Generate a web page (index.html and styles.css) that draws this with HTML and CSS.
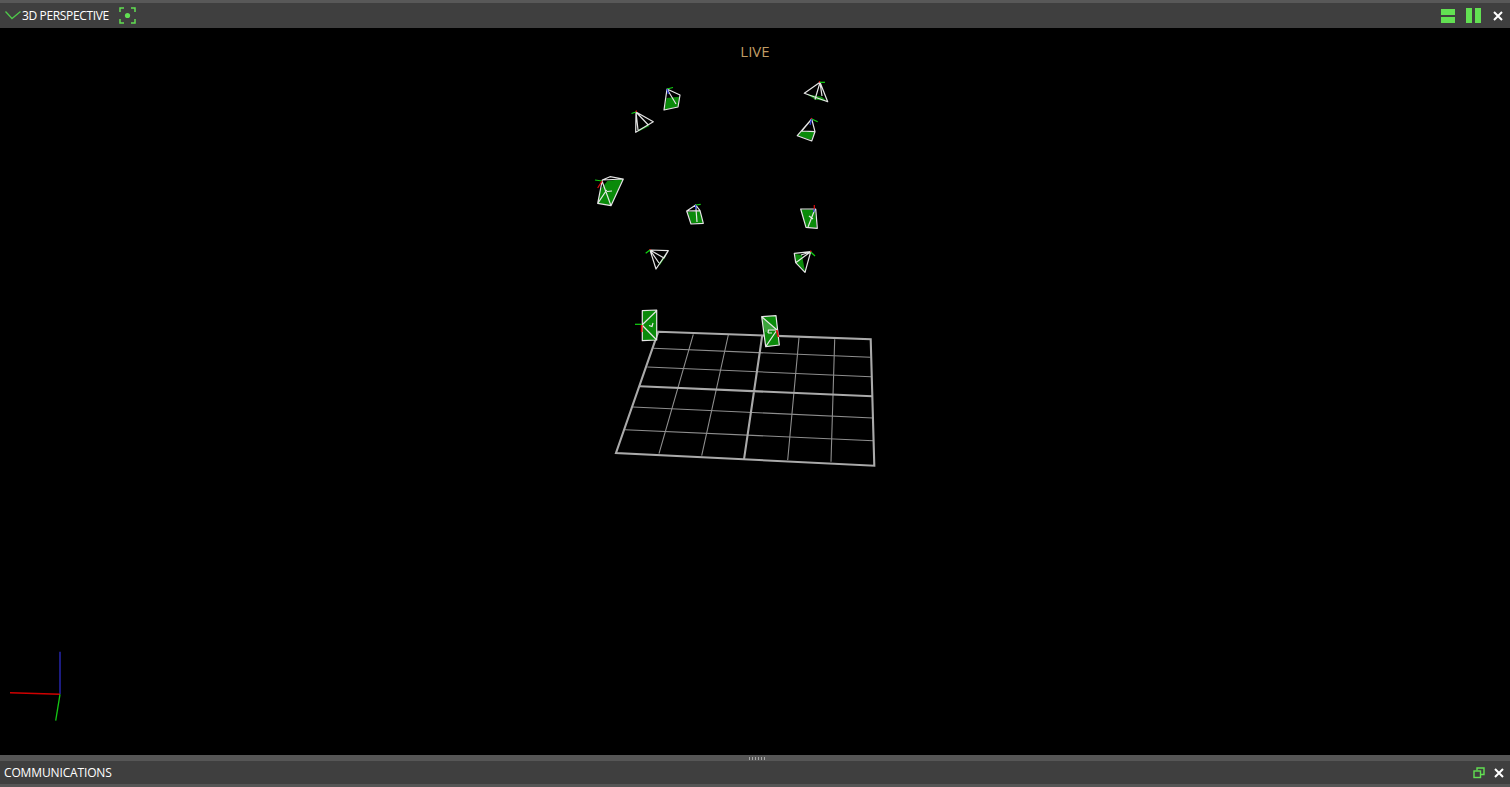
FILE: index.html
```html
<!DOCTYPE html>
<html lang="en">
<head>
<meta charset="utf-8">
<title>3D Perspective</title>
<link rel="stylesheet" href="styles.css">
</head>
<body>
<div class="app">
  <header class="panel-bar top-bar">
    <div class="bar-left">
      <svg class="chevron" width="17" height="12" viewBox="0 0 17 12"><path d="M0.5 1.5 L7 8.5 L15.5 1.5" /></svg>
      <span class="bar-title top-title">3D PERSPECTIVE</span>
      <svg class="focus" width="17" height="17" viewBox="0 0 17 17">
        <path d="M1 5V1H5M12 1H16V5M16 12V16H12M5 16H1V12" />
        <circle cx="8.5" cy="8.5" r="2.6" />
      </svg>
    </div>
    <div class="bar-right">
      <span class="split-h"><i></i><i></i></span>
      <span class="split-v"><i></i><i></i></span>
      <svg class="close" width="10" height="10" viewBox="0 0 10 10"><path d="M1 1L9 9M9 1L1 9" /></svg>
    </div>
  </header>

  <main class="viewport">
    <svg class="scene" viewBox="0 28 1510 727" preserveAspectRatio="none">
      <g class="grid-thin">
        <path d="M653.3 348.3L870.3 357.3M647.3 367L871 376.7M632.7 407L873 418M625 429.7L873.3 440.7" />
        <path d="M693.3 334.3L659 453.7M728.3 335L701.7 455.7M799 337.7L787.7 460M834.7 339.3L831 461.7" />
      </g>
      <g class="grid-thick">
        <path d="M639.7 386.3L872.3 396.3M762.3 335L744 459.3" />
        <path d="M658.3 331.7L870.7 339.3L874.3 465.7L616 453Z" />
      </g>

      <!-- camera frusta -->
      <g class="cam">
        <polygon class="img" points="666.7,98 679.3,96.7 677.7,106.7 664.3,110" />
        <path class="wire" d="M667 89L680 95L678 107L664 110ZM667 89L676 104" />
        <path class="ax-g" d="M667 89L673 87.5" /><path class="ax-b" d="M667 89L668.5 94" />
      </g>
      <g class="cam">
        <polygon class="img" points="638,130 648.3,125 649.5,126 638.5,131.5" />
        <path class="wire" d="M636 112L653.3 121.7L635.7 132.3ZM636 112L648.3 125M636 112L638 130" />
        <path class="ax-g" d="M636 112L631.5 113.5" /><path class="ax-r" d="M636 112L636.5 110.5" />
      </g>
      <g class="cam">
        <polygon class="img" points="806.7,94.3 821.7,96.7 826.7,101 815,99.5" />
        <path class="wire" d="M820 82.3L804.3 93.3L827.7 101.7ZM820 82.3L815 99.5M820 82.3L822 96" />
        <path class="ax-g" d="M820 82.3L825 82.3" /><path class="ax-r" d="M820 82.3L819 81.5" />
      </g>
      <g class="cam">
        <polygon class="img" points="801.7,131 815,131.7 811,140 798,135.7" />
        <path class="wire" d="M811.7 119L797.3 135.7L811.7 141L815 131.7ZM811.7 119L801.7 131M811.7 119L815 131.7M801.7 131L815 131.7" />
        <path class="ax-g" d="M811.7 119L817.7 121.7" /><path class="ax-b" d="M811.7 119L810 125" /><path class="ax-r" d="M811.7 119L811 118" />
      </g>
      <g class="cam">
        <polygon class="img" points="607.5,180.7 622.7,179.3 611,205.7 598,203.3 600,190" />
        <path class="wire" d="M610 176.7L623.3 179L611 205.7L597.7 203.3L602.3 180ZM602 181L611 205.7M606.7 190L597.7 203.3M602.3 180L623.3 179" />
        <path class="ax-g" d="M595 180L602 181" /><path class="ax-r" d="M597.7 188L602 181" /><path class="ax-w" d="M607 191.5L612 191" />
      </g>
      <g class="cam">
        <polygon class="img" points="687.7,212 700,210.7 703,223 691.5,223.5" />
        <path class="wire" d="M695.7 205L686.7 211L691 224L703.3 223.3L700 210.7ZM686.7 211L700 210.7M695.7 205L697 222" />
        <path class="ax-g" d="M695.7 205L700.7 204.3" /><path class="ax-b" d="M695.7 205L695.7 209" />
      </g>
      <g class="cam">
        <polygon class="img" points="658.5,264 665,255 666,256 660,265" />
        <path class="wire" d="M650 250L668.3 250.7L656 269ZM650 250L664 258L668.3 250.7M650 250L659 263" />
        <path class="ax-g" d="M650 250L645.7 253.3" /><path class="ax-r" d="M650 250L650 249" />
      </g>
      <g class="cam">
        <polygon class="img" points="801,209.5 815,209.5 816.7,228 806,227" />
        <path class="wire" d="M800.7 209L815.7 209L817.3 228.3L806 227.3ZM815 209L808 227M809 216L813 219" />
        <path class="ax-r" d="M814.3 209L814.3 205" /><path class="ax-b" d="M814.5 209L813.5 212" />
      </g>
      <g class="cam">
        <polygon class="img" points="795,254 802,255 805,271.5 796,262.5" />
        <path class="wire" d="M810.7 251.7L794.3 253.3L795.7 262.7L805 272.3ZM810.7 251.7L795.7 262.7M810.7 251.7L801 255" />
        <path class="ax-g" d="M810.7 252L815 256" /><path class="ax-r" d="M810.7 252L810.7 250.5" />
      </g>
      <g class="cam">
        <polygon class="img" points="642.3,310.7 656.7,310 656.7,340 642.3,340.7" />
        <path class="wire" d="M642.3 310.7L656.7 310L656.7 340L642.3 340.7ZM656.7 310.7L642 325L656.7 340" />
        <path class="ax-w" d="M649 325.5L652 326.5L653 323" />
        <path class="ax-g" d="M635 324.3L642 324.3" /><path class="ax-r wide" d="M641.7 325L641.7 332" />
      </g>
      <g class="cam">
        <polygon class="img" points="761.7,316.7 776,315.7 779.3,345 765.7,346.7" />
        <polygon class="img-light" points="762,317 777,330 765,332" />
        <path class="wire" d="M761.7 316.7L776 315.7L779.3 345L765.7 346.7ZM761.7 316.7L777 330L765.7 346.7" />
        <path class="ax-w" d="M768 333L768.5 330L776 330M768 333L772 333" />
        <path class="ax-r wide" d="M776.7 330L778.3 337" />
      </g>

      <!-- origin axes -->
      <path class="axis-b" d="M60 651.7L60 694.3" />
      <path class="axis-r" d="M10 692.7L60 694.3" />
      <path class="axis-g" d="M60 694.3L55.7 720.7" />
    </svg>
    <div class="live">LIVE</div>
  </main>

  <div class="splitter"><span class="grip"></span></div>

  <footer class="panel-bar bottom-bar">
    <span class="bar-title bottom-title">COMMUNICATIONS</span>
    <div class="bar-right bottom-right">
      <svg class="restore" width="12" height="12" viewBox="0 0 12 12">
        <path d="M4 3.5V1H11V7.5H8" /><rect x="1" y="4" width="6.5" height="6.5" />
      </svg>
      <svg class="close" width="10" height="10" viewBox="0 0 10 10"><path d="M1 1L9 9M9 1L1 9" /></svg>
    </div>
  </footer>
</div>
</body>
</html>
```
FILE: styles.css
```css
* { box-sizing: border-box; }
html, body { margin: 0; height: 100%; background: #000; overflow: hidden; }
.app {
  display: flex;
  flex-direction: column;
  height: 787px;
  font-family: "Open Sans", "Noto Sans", sans-serif;
}
.panel-bar {
  display: flex;
  align-items: center;
  justify-content: space-between;
  background: #3f3f3f;
  flex: none;
}
.top-bar {
  height: 28px;
  border-top: 3px solid #585858;
  padding: 0 7px 0 5px;
}
.bar-left { display: flex; align-items: center; }
.bar-title { color: #fff; font-size: 12px; line-height: 16px; white-space: nowrap; margin-top: 1px; }
.top-title { letter-spacing: -0.36px; }
.bottom-title { letter-spacing: -0.14px; }
.chevron { display: block; margin-top: 1px; }
.chevron path { fill: none; stroke: #4fc84a; stroke-width: 1.3; }
.focus { margin-left: 10px; display: block; }
.focus path { fill: none; stroke: #62e052; stroke-width: 1.5; }
.focus circle { fill: #62e052; }
.bar-right { display: flex; align-items: center; }
.split-h { display: flex; flex-direction: column; gap: 2px; width: 14px; }
.split-h i { display: block; height: 6px; background: #62e052; }
.split-v { display: flex; gap: 3px; height: 15px; margin-left: 11px; }
.split-v i { display: block; width: 6px; background: #62e052; }
.top-bar .close { margin-left: 12px; }
.close { display: block; }
.close path { fill: none; stroke: #fff; stroke-width: 2; }

.viewport { position: relative; flex: 1; min-height: 0; background: #000; }
.scene { display: block; width: 100%; height: 100%; }
.live {
  position: absolute;
  top: 13px;
  left: 0;
  right: 0;
  text-align: center;
  color: #c09c64;
  font-size: 15px;
  line-height: 20px;
}

.grid-thin path { fill: none; stroke: #8e8e8e; stroke-width: 1.1; }
.grid-thick path { fill: none; stroke: #aaa; stroke-width: 2.1; }
.cam .img { fill: #0a8a0a; }
.cam .img-light { fill: #3da33d; }
.cam .wire { fill: none; stroke: #e6e6e6; stroke-width: 1.2; stroke-linejoin: round; }
.cam .ax-g, .cam .ax-r, .cam .ax-b, .cam .ax-w { fill: none; stroke-width: 1.2; }
.ax-g { stroke: #12d512; }
.ax-r { stroke: #e01010; }
.cam .ax-r.wide { stroke-width: 1.7; }
.ax-b { stroke: #2a3ad8; }
.ax-w { stroke: #e8e8e8; }
.axis-b { stroke: #20208f; stroke-width: 1.8; fill: none; }
.axis-r { stroke: #d00000; stroke-width: 1.4; fill: none; }
.axis-g { stroke: #14c814; stroke-width: 1.3; fill: none; }

.splitter {
  flex: none;
  height: 6px;
  background: #565656;
  display: flex;
  align-items: center;
  justify-content: center;
}
.grip {
  display: block;
  width: 17px;
  height: 3px;
  margin-left: 3px;
  background-image: radial-gradient(circle, #a8a8a8 0.7px, transparent 0.9px);
  background-size: 3px 2px;
}
.bottom-bar {
  height: 26px;
  border-bottom: 3px solid #555;
  padding: 0 6px 0 4px;
}
.restore { display: block; }
.restore path, .restore rect { fill: none; stroke: #62e052; stroke-width: 1.4; }
.bottom-right .close { margin-left: 9px; }
```
